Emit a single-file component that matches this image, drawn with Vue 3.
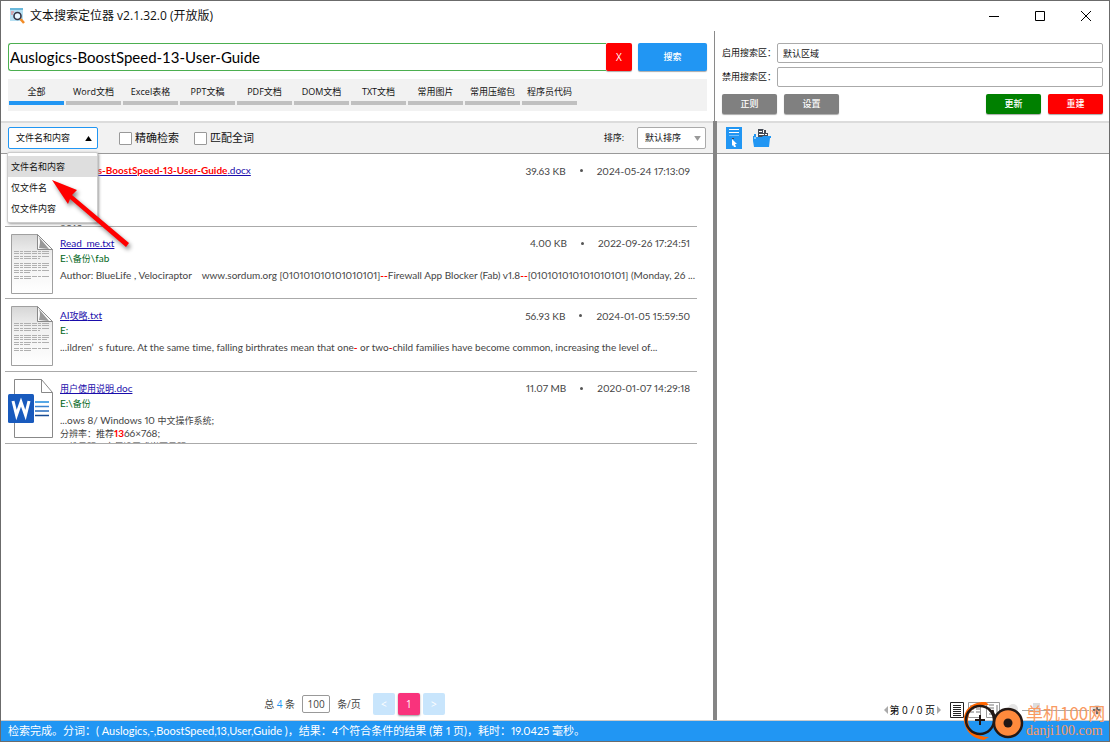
<script setup>
import { ref } from 'vue'
const query = ref('Auslogics-BoostSpeed-13-User-Guide')
const tabs = ['全部', 'Word文档', 'Excel表格', 'PPT文稿', 'PDF文档', 'DOM文档', 'TXT文档', '常用图片', '常用压缩包', '程序员代码']
const scopes = ['文件名和内容', '仅文件名', '仅文件内容']

// Chinese runs are set one size smaller than the Latin text beside them.
const runs = (parts) => parts.flatMap(([text, hit]) =>
  text.split(/([\u3000-\u9fff\uff00-\uffef]+)/).filter(Boolean).map((t) => ({ t, hit: !!hit, cjk: /[\u3000-\u9fff\uff00-\uffef]/.test(t) })))

const rows = [
  { icon: '', size: '39.63 KB', date: '2024-05-24 17:13:09', name: [['Auslogics-BoostSpeed-13-User-Guide', 1], ['.docx', 0]], path: '', lines: [[], [], [['2010', 0]]] },
  { icon: 'txt', size: '4.00 KB', date: '2022-09-26 17:24:51', name: [['Read_me.txt', 0]], path: 'E:\\备份\\fab', lines: [[['Author: BlueLife , Velociraptor \u00a0\u00a0 www.sordum.org [010101010101010101]', 0], ['--', 1], ['Firewall App Blocker (Fab) v1.8', 0], ['--', 1], ['[010101010101010101] (Monday, 26 ...', 0]]] },
  { icon: 'txt', size: '56.93 KB', date: '2024-01-05 15:59:50', name: [['AI攻略.txt', 0]], path: 'E:', lines: [[['...ildren’\u00a0 s future. At the same time, falling birthrates mean that one', 0], ['-', 1], [' or two', 0], ['-', 1], ['child families have become common, increasing the level of...', 0]]] },
  { icon: 'doc', size: '11.07 MB', date: '2020-01-07 14:29:18', name: [['用户使用说明.doc', 0]], path: 'E:\\备份', lines: [[['...ows 8/ Windows 10 中文操作系统;', 0]], [['分辨率：推荐', 0], ['13', 1], ['66×768;', 0]], [['二维显明：方便设置成当页显明', 0]]] },
]
</script>

<template>
  <div class="window">
    <header class="titlebar">
      <svg class="app-icon" viewBox="0 0 16 16"><path d="M1 0h13v13H1z" fill="#b5dff2" /><path d="M1 0h13v2H1z" fill="#69b8db" /><path d="M2 4h3M2 6h2" stroke="#e77" /><circle cx="8.500" cy="8" r="3.500" fill="#e9f7ff" stroke="#334" stroke-width="1.600" /><path d="M11.500 11l3.500 4" stroke="#f28b25" stroke-width="2.500" /></svg>
      <h1>文本搜索定位器 v2.1.32.0 (开放版)</h1>
      <div class="controls">
        <button aria-label="最小化"><svg viewBox="0 0 12 12"><path d="M1 6.500h10" /></svg></button>
        <button aria-label="最大化"><svg viewBox="0 0 12 12"><path d="M1.500 1.500h9v9h-9z" /></svg></button>
        <button aria-label="关闭"><svg viewBox="0 0 12 12"><path d="M1 1l10 10M11 1L1 11" /></svg></button>
      </div>
    </header>

    <div class="top">
      <section class="search-area">
        <form class="search" @submit.prevent>
          <input v-model="query" aria-label="搜索内容" />
          <button type="button" class="clear">X</button>
          <button class="go">搜索</button>
        </form>
        <nav class="tabs">
          <button v-for="(t, i) in tabs" :key="t" :class="{ active: i === 0 }">{{ t }}</button>
        </nav>
      </section>
      <section class="zones">
        <div class="field"><label for="on">启用搜索区：</label><input id="on" value="默认区域" /></div>
        <div class="field"><label for="off">禁用搜索区：</label><input id="off" /></div>
        <div class="actions">
          <button>正则</button><button>设置</button>
          <button class="green">更新</button><button class="red">重建</button>
        </div>
      </section>
    </div>

    <main class="main">
      <section class="left">
        <div class="toolbar">
          <div class="scope">
            <button class="scope-btn" aria-haspopup="listbox" aria-expanded="true">文件名和内容<svg viewBox="0 0 8 6"><path d="M0 6l4-6 4 6z" /></svg></button>
            <ul class="menu" role="listbox">
              <li v-for="(s, i) in scopes" :key="s" role="option" :aria-selected="i === 0" :class="{ chosen: i === 0 }">{{ s }}</li>
            </ul>
          </div>
          <label class="check"><input type="checkbox" />精确检索</label>
          <label class="check"><input type="checkbox" />匹配全词</label>
          <label class="sort-label" for="sort">排序:</label>
          <div class="sort"><select id="sort"><option>默认排序</option></select><svg viewBox="0 0 8 6"><path d="M0 0h8l-4 6z" /></svg></div>
        </div>
        <div class="results">
          <article v-for="r in rows" :key="r.date" class="row">
            <div class="thumb">
              <svg v-if="r.icon === 'txt'" viewBox="0 0 48 62">
                <defs><linearGradient id="sheet" x1="0" y1="0" x2="0" y2="1"><stop offset="0" stop-color="#d6d6d6" /><stop offset=".35" stop-color="#f0f0f0" /><stop offset="1" stop-color="#fff" /></linearGradient></defs>
                <path d="M4.500 1.500h26l15 15v44h-41z" fill="url(#sheet)" stroke="#a0a0a0" />
                <path d="M30.500 1.500l15 15h-15z" fill="#fafafa" stroke="#8a8a8a" /><path d="M31 3c3 4 2 8 1 12l10 1z" fill="#999" />
                <path d="M7 18.500h35M7 20.500h35M7 23.500h35M7 25.500h26M7 30.500h35M7 32.500h35M7 34.500h33M7 37.500h35M7 39.500h16M7 43.500h35M7 45.500h18" stroke="#b0b0b0" stroke-dasharray="5 1 3 1 7 1" />
              </svg>
              <svg v-else-if="r.icon === 'doc'" viewBox="0 0 48 62">
                <path d="M7.500 1.500h27l11 13v45h-38z" fill="#fff" stroke="#888" /><path d="M34.500 1.500v13h11" fill="none" stroke="#888" />
                <path d="M28 24h14" stroke="#57a8e6" stroke-width="2" /><path d="M28 28.500h14" stroke="#3b83d0" stroke-width="1.500" /><path d="M28 33h14" stroke="#2468bb" stroke-width="1.500" /><path d="M28 37.500h14" stroke="#174a92" stroke-width="1.500" />
                <rect x="1" y="16" width="26" height="29" rx="1.500" fill="#185abd" /><path d="M6 23l3.500 14 4.500-13 4.500 13L22 23" fill="none" stroke="#fff" stroke-width="3" />
              </svg>
            </div>
            <div class="info">
              <div class="head">
                <a href="#" @click.prevent><span v-for="(p, i) in runs(r.name)" :key="i" :class="{ hit: p.hit, cjk: p.cjk }">{{ p.t }}</span></a>
                <span class="meta"><span>{{ r.size }}</span><i></i><time>{{ r.date }}</time></span>
              </div>
              <div class="path"><span v-for="(p, i) in runs([[r.path, 0]])" :key="i" :class="{ cjk: p.cjk }">{{ p.t }}</span></div>
              <p><span v-for="(l, i) in r.lines" :key="i" class="line"><span v-for="(p, j) in runs(l)" :key="j" :class="{ hit: p.hit, cjk: p.cjk }">{{ p.t }}</span></span></p>
            </div>
          </article>
        </div>
        <footer class="pager">
          <span>总 <b>4</b> 条</span>
          <input value="100" aria-label="每页条数" />
          <span>条/页</span>
          <button disabled>&lt;</button><button class="current">1</button><button disabled>&gt;</button>
        </footer>
      </section>
      <div class="splitter"></div>
      <section class="preview">
        <div class="toolbar preview-tools">
          <button aria-label="选择文件"><svg width="16" height="22" viewBox="0 0 16 22"><path d="M0 0h16v22H0z" fill="#2196f3" /><path d="M3 2.500h10M3 5.500h10" stroke="#fff" /><path d="M3 8.500h10" stroke="#7cc0f8" /><path d="M6 11.500h2" stroke="#445" /><path d="M6 12l5 5H9l1 3H8l-1-2-1 1z" fill="#fff" /></svg></button>
          <button aria-label="打开文件夹"><svg width="18" height="19" viewBox="0 0 18 19"><path d="M5 0h5l1 1h2v3h2v4H5z" fill="#444a55" /><path d="M6 2.500h3M6 5.500h5M10.500 1v3M12 5.500h2" stroke="#fff" /><path d="M1 5h2v2H1z" fill="#2196f3" /><path d="M0 7h3v1h6l1-1h8v2h-1l-1 9H1L0 12z" fill="#2196f3" /><path d="M2 8v2" stroke="#fff" /></svg></button>
        </div>
        <div class="page-tools">
          <div class="pages"><svg viewBox="0 0 4 8"><path d="M4 0v8L0 4z" /></svg><span>第 0 / 0 页</span><svg viewBox="0 0 4 8"><path d="M0 0v8l4-4z" /></svg></div>
          <svg class="view-tools" viewBox="0 0 160 18">
            <path d="M1.500 1.500h13v15h-13z" fill="#fff" stroke="#222" /><path d="M4 4.500h8M4 6.500h8M4 8.500h8M4 10.500h8M4 12.500h8M4 14.500h8" stroke="#222" />
            <g stroke="#999" fill="#fff"><path d="M19.500 1.500h12v15h-12zM37.500 1.500h13v15h-13z" /><path d="M21 5h4M27 5h4M21 8h4M27 8h4M21 11h4M27 11h4M40 4h5M40 7h5M40 10h5M40 13h5M48 4v9" stroke="#777" /></g>
            <circle cx="64" cy="8" r="5" fill="#e5e5e5" /><path d="M73 9.500h67" stroke="#aaa" /><path d="M84 2h7v9l-3 3-4-3z" fill="#ddd" />
            <circle cx="148" cy="9" r="5" fill="#ddd" /><path d="M144 9h8M148 5v8" stroke="#666" stroke-width="2" />
          </svg>
        </div>
      </section>
    </main>

    <footer class="status">检索完成。分词：( Auslogics,-,BoostSpeed,13,User,Guide )，结果：4个符合条件的结果 (第 1 页)，耗时：19.0425 毫秒。</footer>

    <svg class="arrow" viewBox="0 0 90 80"><path d="M2 3l25 10-5 5 57 48-3 4-56-48-2 5z" fill="#f00" /></svg>
    <div class="mark">
      <svg viewBox="0 0 64 42"><path d="M24 2C9 1 1 11 2 21s9 18 20 19l5-3C14 37 6 30 6 20S13 5 27 5z" fill="#f60" /><circle cx="18" cy="20" r="14" fill="none" stroke="#231815" stroke-width="2.500" /><path d="M13 20h10M18 15v10" stroke="#231815" stroke-width="2" /><path d="M30 10c1 5 3 8 7 7" fill="none" stroke="#231815" stroke-width="3" /><circle cx="46" cy="23" r="14" fill="#ff8a3c" stroke="#231815" stroke-width="2.500" /><circle cx="46" cy="23" r="4.500" fill="#231815" /></svg>
      <div><strong>单机100网</strong><em>danji100.com</em></div>
    </div>
  </div>
</template>

<style>
body { margin: 0; }
</style>

<style scoped>
* { box-sizing: border-box; }
.window { position: relative; display: flex; flex-direction: column; height: 100vh; overflow: hidden; background: #fff; color: #111; border: 1px solid #6b6b6b; font: 9px/12px "Open Sans", "Noto Sans CJK SC", sans-serif; }
button, input, select { font: inherit; color: inherit; margin: 0; padding: 0; border: 0; background: none; }
.titlebar { display: flex; align-items: center; height: 30px; padding-left: 8px; flex: none; }
.app-icon { width: 16px; height: 16px; margin-right: 5px; }
h1 { margin: 0; font-size: 12px; line-height: 16px; font-weight: 400; flex: 1; }
.controls { display: flex; }
.controls button { width: 46px; height: 28px; }
.controls svg { width: 12px; height: 12px; display: block; margin: auto; fill: none; stroke: #000; }
.top { display: grid; grid-template-columns: 713fr 395fr; height: 90px; flex: none; }
.search-area { min-width: 0; padding: 12px 7px 0 7px; }
.search { display: flex; height: 28px; }
.search input { flex: 1; min-width: 0; border: 1px solid #4caf50; border-right: 0; border-radius: 3px 0 0 3px; padding-left: 1px; font-family: Lato, sans-serif; font-size: 15px; color: #000; }
.clear { width: 26px; background: #f00; color: #fff; border-radius: 2px; font-size: 10px; box-shadow: 0 1px 1px #aaa; }
.go { width: 69px; margin-left: 6px; background: #2196f3; color: #fff; border-radius: 2px; box-shadow: 0 1px 1px #aaa; font-weight: 500; }
.tabs { display: flex; gap: 2px; height: 32px; margin-top: 8px; padding-left: 1px; background: #f2f2f2; }
.tabs button { width: 55px; height: 26px; border-bottom: 4px solid #c0c0c0; white-space: nowrap; padding-top: 3px; }
.tabs .active { border-color: #2196f3; }
.zones { min-width: 0; border-left: 1px solid #8a8a8a; padding: 12px 6px 0 7px; }
.field { display: flex; align-items: center; height: 20px; margin-bottom: 4px; }
.field label { width: 55px; white-space: nowrap; }
.field input { flex: 1; min-width: 0; height: 20px; border: 1px solid #aaa; border-radius: 2px; padding-left: 5px; }
.actions { display: flex; gap: 7px; margin-top: 7px; }
.actions button { width: 55px; height: 20px; background: #808080; color: #fff; border-radius: 2px; box-shadow: 0 1px 1px #aaa; font-weight: 500; }
.actions .green { background: #008000; margin-left: auto; }
.actions .red { background: #f00; }
.main { flex: 1; display: grid; grid-template-columns: 712fr 4px 392fr; min-height: 0; }
.left { min-width: 0; display: flex; flex-direction: column; }
.splitter { background: #858585; }
.preview { min-width: 0; display: flex; flex-direction: column; }
.toolbar { display: flex; align-items: center; height: 33px; flex: none; padding: 0 7px; background: #f2f2f2; border-top: 2px solid #dcdcdc; border-bottom: 1px solid #999; }
.preview-tools { gap: 11px; padding-left: 9px; }
.preview-tools svg { display: block; }
.scope { position: relative; }
.scope-btn { display: flex; align-items: center; justify-content: space-between; width: 90px; height: 22px; padding: 0 5px 0 7px; background: #fff; border: 1px solid #2196f3; border-radius: 2px; }
.scope-btn svg { width: 7px; height: 5px; }
.menu { position: absolute; z-index: 2; left: -1px; top: 25px; width: 91px; margin: 0; padding: 3px 0; list-style: none; background: #fff; border: 1px solid #ccc; border-radius: 2px; box-shadow: 1px 1px 3px #999; }
.menu li { line-height: 21px; padding-left: 3px; }
.menu .chosen { background: #dedede; }
.check { display: flex; align-items: center; margin-left: 21px; font-size: 11px; }
.check + .check { margin-left: 15px; }
.check input { appearance: none; width: 13px; height: 13px; border: 1px solid #999; border-radius: 1px; background: #fff; margin-right: 3px; }
.sort-label { margin-left: auto; margin-right: 13px; }
.sort { position: relative; width: 69px; }
.sort select { appearance: none; width: 100%; height: 22px; display: block; padding-left: 7px; background: #fff; border: 1px solid #aaa; border-radius: 2px; }
.sort svg { position: absolute; right: 5px; top: 9px; width: 7px; height: 5px; fill: #999; pointer-events: none; }
.results { display: grid; grid-template-rows: repeat(4, 1fr); height: 290px; margin: 0 16px 0 4px; }
.row { display: flex; min-height: 0; overflow: hidden; border-bottom: 1px solid #aaa; }
.thumb { width: 48px; margin: 6px 4px 0 2px; flex: none; }
.thumb svg { display: block; width: 48px; height: 62px; }
.info { flex: 1; min-width: 0; padding: 9px 7px 0 1px; color: #444; white-space: nowrap; font-family: Lato, "Noto Sans CJK SC", sans-serif; font-size: 10px; font-variant-numeric: proportional-nums; font-variant-ligatures: none; }
.cjk { font-size: 9px; }
.head { display: flex; justify-content: space-between; height: 15px; line-height: 14px; }
.info a { color: #1a0dab; text-decoration: underline; }
.hit { color: #f00; font-weight: 700; }
.meta { display: flex; align-items: center; }
.meta i { width: 3px; height: 3px; margin: 0 14px; border-radius: 50%; background: #555; }
.path { height: 15px; line-height: 14px; color: #006621; }
.info p { margin: 3px 0 0; }
.line { display: block; height: 13px; line-height: 13px; }
.pager { display: flex; align-items: center; justify-content: center; margin-top: auto; height: 32px; color: #444; padding-right: 5px; }
.pager b { color: #2196f3; font-weight: 400; font-size: 10px; }
.pager span { font-size: 10px; }
.pager input { width: 28px; height: 18px; margin: 0 7px; border: 1px solid #999; border-radius: 2px; text-align: center; font-size: 10px; }
.pager button { width: 22px; height: 22px; border-radius: 2px; background: #c8e5fc; color: #fff; margin-left: 3px; font-size: 10px; }
.pager span + button { margin-left: 12px; }
.pager .current { background: #f9337c; box-shadow: 0 1px 2px #999; }
.page-tools { display: flex; justify-content: flex-end; align-items: center; margin-top: auto; height: 20px; color: #000; }
.pages { display: flex; align-items: center; gap: 2px; margin-right: 8px; font-size: 10px; }
.pages svg { width: 4px; height: 8px; fill: #aaa; }
.view-tools { width: 160px; height: 18px; }
.status { flex: none; height: 21px; line-height: 20px; padding-left: 7px; border-top: 1px solid #ccc; background: #2196f3; color: #fff; font-family: Lato, "Noto Sans CJK SC", sans-serif; font-size: 11px; font-variant-numeric: proportional-nums; white-space: nowrap; }
.arrow { position: absolute; z-index: 3; left: 49px; top: 176px; width: 90px; height: 80px; pointer-events: none; filter: drop-shadow(2px 3px 2px #0007); }
.mark { position: absolute; right: 0; bottom: -1px; display: flex; width: 147px; align-items: center; }
.mark > svg { width: 64px; height: 42px; flex: none; }
.mark strong, .mark em { display: block; font: 400 17px/20px "Noto Sans CJK SC", sans-serif; color: #f99a62; white-space: nowrap; }
.mark em { font: 400 14px/16px "Liberation Serif", serif; }
</style>
